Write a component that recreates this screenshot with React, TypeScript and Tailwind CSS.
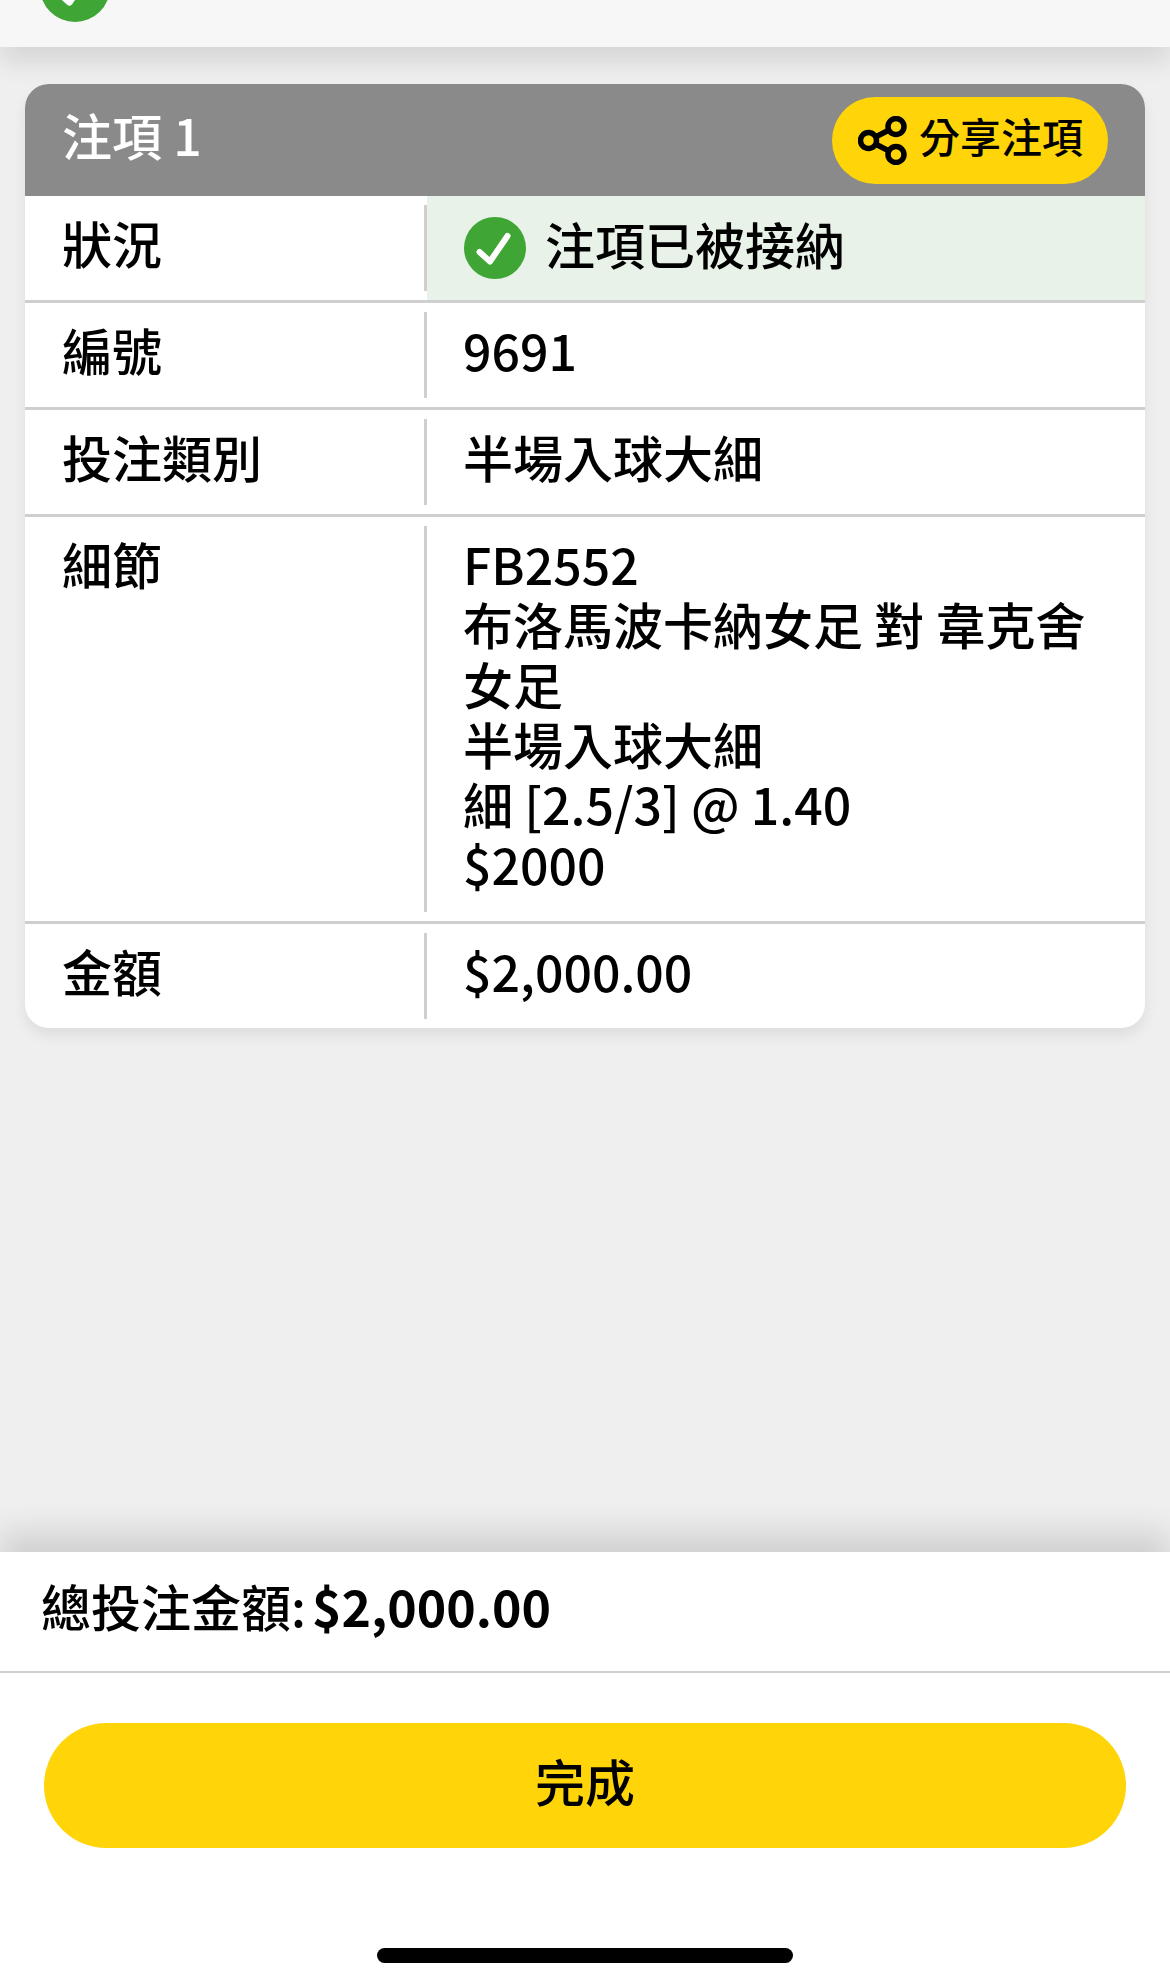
import type { ReactNode } from 'react'

type RowProps = {
  label: string
  children: ReactNode
  tinted?: boolean
  last?: boolean
}

function Row({ label, children, tinted, last }: RowProps) {
  return (
    <div className={last ? 'flex' : 'flex border-b-[3px] border-[#cfcfcf]'}>
      <div className="w-[402px] shrink-0 py-[9px]">
        <div className="h-full border-r-[3px] border-[#cfcfcf] pb-[19px] pl-[37px] pt-[7px]">{label}</div>
      </div>
      <div className={tinted ? 'flex-1 bg-[#e8f2e9] pb-[28px] pl-[36px] pt-[16px]' : 'flex-1 pb-[28px] pl-[36px] pt-[16px]'}>
        {children}
      </div>
    </div>
  )
}

function ShareIcon() {
  return (
    <svg width="49" height="49" viewBox="0 0 49 49" fill="none" stroke="#000" strokeWidth="5.5" aria-hidden="true">
      <circle cx="38" cy="10.5" r="8" />
      <circle cx="10.5" cy="24.5" r="8" />
      <circle cx="38" cy="38.5" r="8" />
      <path d="M17.5 21 31 14M17.5 28 31 35" />
    </svg>
  )
}

function CheckBadge({ size }: { size: number }) {
  return (
    <svg width={size} height={size} viewBox="0 0 62 62" className="shrink-0" aria-hidden="true">
      <circle cx="31" cy="31" r="31" fill="#3fa535" />
      <path d="M15.5 35 26 44.5 43.5 19" fill="none" stroke="#fff" strokeWidth="6" strokeLinecap="round" strokeLinejoin="round" />
    </svg>
  )
}

export default function App() {
  return (
    <div className="flex min-h-screen flex-col bg-[#efefef] font-['Noto_Sans_CJK_TC','Noto_Sans',sans-serif] text-[50px] font-medium leading-[60px] text-black">
      <header className="relative z-10 flex h-[47px] items-end gap-[80px] overflow-hidden bg-[#f7f7f7] pb-[25px] pl-[40px] shadow-[0_16px_24px_rgba(0,0,0,0.1)]">
        <CheckBadge size={70} />
        <span className="mb-[24px] text-[32px] leading-[32px] text-[#888]">注項已被接納</span>
      </header>

      <main className="flex-1 px-[25px] pt-[37px]">
        <section className="rounded-[24px] bg-white shadow-[0_8px_14px_rgba(0,0,0,0.07)]">
          <div className="flex h-[112px] items-center justify-between rounded-t-[24px] bg-[#8a8a8a] px-[37px]">
            <h2 className="pb-[12px] text-[50px] font-medium text-white">注項 1</h2>
            <button className="flex h-[87px] w-[276px] items-center gap-[12px] rounded-full bg-[#ffd408] pl-[26px] text-[41px] font-medium leading-[48px]">
              <ShareIcon />
              <span className="pb-[10px]">分享注項</span>
            </button>
          </div>

          <Row label="狀況" tinted>
            <div className="flex h-[60px] translate-y-[6px] items-center gap-[19px] pl-[1px]">
              <CheckBadge size={62} />
              <span className="pb-[10px]">注項已被接納</span>
            </div>
          </Row>
          <Row label="編號">9691</Row>
          <Row label="投注類別">半場入球大細</Row>
          <Row label="細節">
            <div className="pr-[40px]">
              <p>FB2552</p>
              <p>布洛馬波卡納女足 對 韋克舍女足</p>
              <p>半場入球大細</p>
              <p>細 [2.5/3] @ 1.40</p>
              <p>$2000</p>
            </div>
          </Row>
          <Row label="金額" last>$2,000.00</Row>
        </section>
      </main>

      <footer className="bg-white shadow-[0_-20px_30px_rgba(0,0,0,0.13)]">
        <div className="flex h-[121px] items-center border-b-2 border-[#cfcfcf] pb-[13px] pl-[41px]">
          總投注金額:
          <strong className="ml-[6px] font-bold">$2,000.00</strong>
        </div>
        <div className="px-[44px] pt-[50px]">
          <button className="h-[125px] w-full rounded-full bg-[#ffd408] pb-[12px] font-medium">完成</button>
        </div>
        <div className="flex justify-center pb-[24px] pt-[100px]">
          <span className="h-[15px] w-[416px] rounded-full bg-black" />
        </div>
      </footer>
    </div>
  )
}
